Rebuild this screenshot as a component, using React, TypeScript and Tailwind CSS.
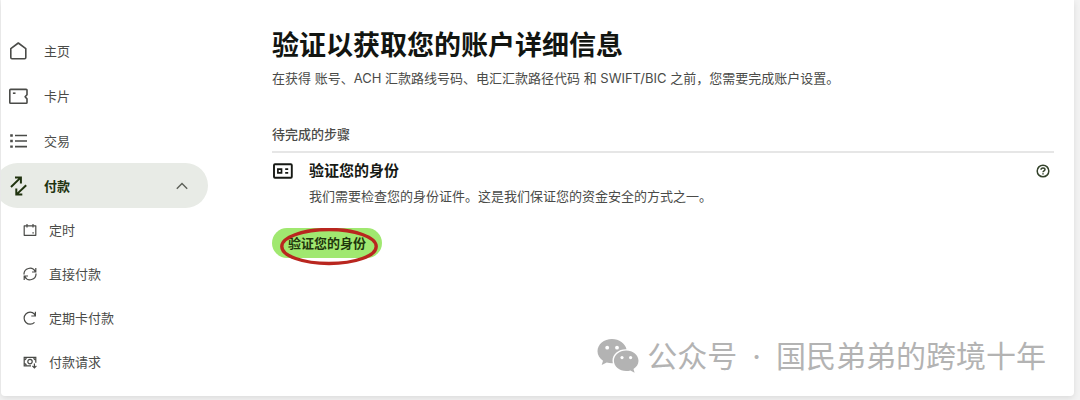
import React, { useState } from 'react';

interface NavItem {
  label: string;
  icon: React.ReactNode;
}

const HomeIcon = () => (
  <svg width="20" height="20" viewBox="0 0 20 20" fill="none" stroke="currentColor" strokeWidth="1.6" strokeLinejoin="round">
    <path d="M2.8 7.6 10.3 2l7.5 5.6v8.9a1.2 1.2 0 0 1-1.2 1.2H4a1.2 1.2 0 0 1-1.2-1.2z" />
  </svg>
);

const CardIcon = () => (
  <svg width="20" height="20" viewBox="0 0 20 20" fill="none" stroke="currentColor" strokeWidth="1.6" strokeLinejoin="round">
    <path d="M2.6 3.4h15.6a.8.8 0 0 1 .8.8v4.5l-1.9 2.1 1.9 2.1v3.6a.8.8 0 0 1-.8.8H2.6a.8.8 0 0 1-.8-.8V4.2a.8.8 0 0 1 .8-.8z" />
    <path d="M4.900 7.200h2.600" />
  </svg>
);

const ListIcon = () => (
  <svg width="20" height="20" viewBox="0 0 20 20" fill="none" stroke="currentColor" strokeWidth="1.7">
    <path d="M7 4.500h12M7 10h12M7 15.600h12" />
    <path d="M2.200 4.500h2.600M2.200 10h2.600M2.200 15.600h2.600" strokeWidth="2.4" />
  </svg>
);

const PaymentsIcon = () => (
  <svg width="20" height="20" viewBox="0 0 20 20" fill="none" stroke="currentColor" strokeWidth="2">
    <path d="M3 11 12.6 1.6M7 1.5h5.9v6" />
    <path d="M18.2 9.2 8.6 18.4M8.3 12.4v6.2h6" />
  </svg>
);

const CalendarIcon = () => (
  <svg width="14" height="14" viewBox="0 0 14 14" fill="none" stroke="currentColor" strokeWidth="1.2" strokeLinejoin="round">
    <path d="M1.2 2.8h11.6v9.5H1.2zM4 1v3.4M10 1v3.4M9.4 9.8h1.4" />
  </svg>
);

const SyncIcon = () => (
  <svg width="14" height="14" viewBox="0 0 14 14" fill="none" stroke="currentColor" strokeWidth="1.2">
    <path d="M1 7.4A5.9 5.9 0 0 1 12.2 4.6M12.8 1v4H9" />
    <path d="M13 6.6A5.9 5.9 0 0 1 1.8 9.4M1.2 13V9H5" />
  </svg>
);

const RepeatIcon = () => (
  <svg width="14" height="14" viewBox="0 0 14 14" fill="none" stroke="currentColor" strokeWidth="1.2">
    <path d="M11.5 11.3A6 6 0 1 1 11.4 3L12 4.6M12.4.8v4.2H8.3" />
  </svg>
);

const RequestIcon = () => (
  <svg width="14" height="14" viewBox="0 0 14 14" fill="none" stroke="currentColor" strokeWidth="1.2">
    <path d="M8 10.8H1.2V2.4h11.6v5.4" />
    <circle cx="7" cy="6.6" r="2.2" />
    <path d="M1.2 4.6c1.2 0 2-.8 2-2.2M12.8 4.6c-1.2 0-2-.8-2-2.2M1.2 8.6c1.2 0 2 .8 2 2.2M11.4 8.6v4M9.4 10.8l2 2 2-2" />
  </svg>
);

const IdIcon = () => (
  <svg width="22" height="20" viewBox="0 0 22 20" fill="none" stroke="currentColor" strokeWidth="1.9">
    <rect x="2" y="3.2" width="17.8" height="13.6" rx="1" />
    <path d="M5.9 8.2h3.6v3.6H5.9z" strokeWidth="1.7" />
    <path d="M13.2 8.2h3M13.2 11.8h3" strokeWidth="1.8" />
  </svg>
);

const HelpIcon = () => (
  <svg width="14" height="14" viewBox="0 0 14 14" fill="none" stroke="currentColor" strokeWidth="1.5">
    <circle cx="7" cy="7" r="5.8" />
    <path d="M5 5.7c0-1.1.8-1.8 2-1.8s2 .7 2 1.7c0 1.3-2 1.3-2 2.7" />
    <path d="M7 9.2v1.4" />
  </svg>
);

const WeChatIcon = () => (
  <svg width="42" height="36" viewBox="0 0 42 36" fill="currentColor">
    <path d="M15 1C7 1 .5 6.4.5 13.3c0 3.9 2.1 7.2 5.5 9.5l-1.3 4.3 5-2.6c1.7.5 3.5.8 5.3.8h.9a10.6 10.6 0 0 1-.4-2.9c0-6.3 6-11.2 13.2-11.2h.8C28.2 5.4 22.2 1 15 1z" />
    <path d="M41.5 22.8c0-5.7-5.5-10.3-12.3-10.3s-12.3 4.6-12.3 10.3S22.4 33 29.2 33c1.5 0 2.9-.2 4.2-.6l4.2 2.3-1.1-3.7c3-1.9 5-4.8 5-8.2z" />
    <g fill="#fff">
      <circle cx="10.2" cy="9.7" r="1.9" />
      <circle cx="20" cy="9.7" r="1.9" />
      <circle cx="25" cy="19.6" r="1.6" />
      <circle cx="33.6" cy="19.6" r="1.6" />
    </g>
  </svg>
);

const mainItems: NavItem[] = [
  { label: '主页', icon: <HomeIcon /> },
  { label: '卡片', icon: <CardIcon /> },
  { label: '交易', icon: <ListIcon /> },
];

const paymentItems: NavItem[] = [
  { label: '定时', icon: <CalendarIcon /> },
  { label: '直接付款', icon: <SyncIcon /> },
  { label: '定期卡付款', icon: <RepeatIcon /> },
  { label: '付款请求', icon: <RequestIcon /> },
];

const Sidebar = () => {
  const [open, setOpen] = useState(true);

  return (
    <nav className="w-[207px] shrink-0 overflow-hidden pt-7">
      {mainItems.map((item) => (
        <a key={item.label} href="#" className="flex h-[45px] items-center gap-4 pl-[7px]">
          {item.icon}
          {item.label}
        </a>
      ))}
      <div className="-ml-1.5">
        <button
          onClick={() => setOpen(!open)}
          aria-expanded={open}
          className="flex h-[45px] w-full items-center gap-4 rounded-full bg-[#e8ebe6] pr-5 pl-[13px] font-semibold text-[#20330f]"
        >
          <PaymentsIcon />
          付款
          <svg className="ml-auto text-[#5d6159]" width="12" height="8" viewBox="0 0 12 8" fill="none" stroke="currentColor" strokeWidth="1.4">
            <path d="M.8 6.8 6 1.5l5.2 5.3" />
          </svg>
        </button>
      </div>
      {open && (
        <div>
          {paymentItems.map((item) => (
            <a key={item.label} href="#" className="flex h-11 items-center gap-3 pl-[22px]">
              {item.icon}
              {item.label}
            </a>
          ))}
        </div>
      )}
    </nav>
  );
};

const App = () => {
  return (
    <div className="flex min-h-screen bg-[#f3f3f3] pr-1.5 pb-1 pl-px font-['Inter','Noto_Sans_CJK_SC',sans-serif] text-[13px] leading-5 text-[#4a4b48]">
      <div className="relative flex grow rounded-b bg-white shadow-[0_2px_6px_rgba(0,0,0,0.1)]">
        <Sidebar />

        <main className="min-w-0 grow pt-7 pr-5 pl-16">
          <h1 className="text-[27px] leading-9 font-semibold text-[#121511]">验证以获取您的账户详细信息</h1>
          <p className="mt-1">
            在获得 账号、ACH 汇款路线号码、电汇汇款路径代码 和 SWIFT/BIC 之前，您需要完成账户设置。
          </p>

          <h2 className="mt-9 border-b-2 border-[#e6e6e6] pb-[7px] font-medium">待完成的步骤</h2>
          <div className="flex items-start pt-2">
            <span className="w-[37px] shrink-0 text-[#161914]">
              <IdIcon />
            </span>
            <div className="grow">
              <h3 className="text-[15px] font-semibold text-[#161914]">验证您的身份</h3>
              <p className="mt-[5px]">我们需要检查您的身份证件。这是我们保证您的资金安全的方式之一。</p>
            </div>
            <button aria-label="帮助" className="mt-[3px] mr-1 text-[#33422a]">
              <HelpIcon />
            </button>
          </div>

          <div className="relative mt-[22px] w-fit">
            <button className="block h-[30px] rounded-full bg-[#a0e870] px-4 font-semibold text-[#1f360c]">
              验证您的身份
            </button>
            <svg className="absolute top-0 left-2" width="98" height="38" viewBox="0 0 98 38" fill="none">
              <ellipse cx="49" cy="18.5" rx="47.2" ry="17" stroke="#b9261f" strokeWidth="3.4" />
            </svg>
          </div>
        </main>

        <div className="absolute right-7 bottom-5 flex items-center gap-2 text-[30px] leading-10 text-[#b3b3b3]">
          <WeChatIcon />
          <div className="flex gap-[15px]">
            <span>公众号</span>
            <span>·</span>
            <span>国民弟弟的跨境十年</span>
          </div>
        </div>
      </div>
    </div>
  );
};

export default App;
